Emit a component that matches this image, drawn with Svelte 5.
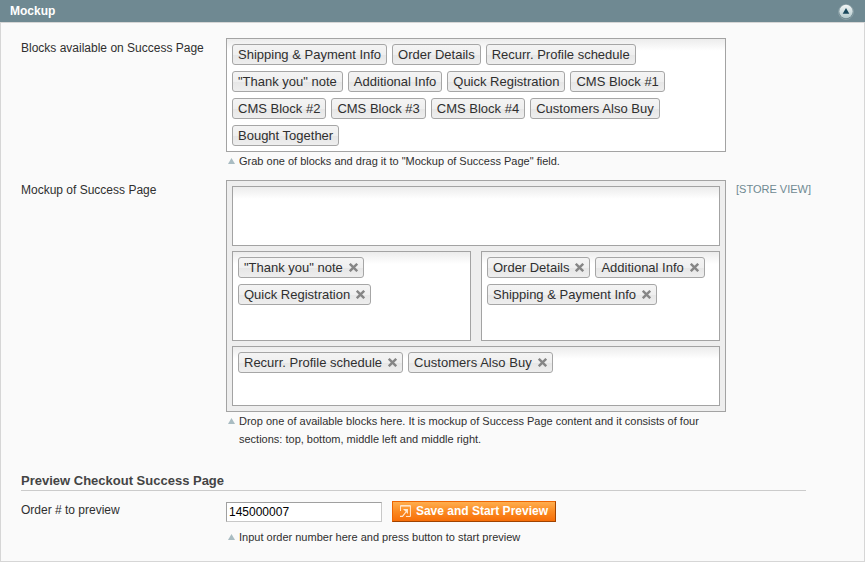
<script>
  const available = [
    'Shipping & Payment Info', 'Order Details', 'Recurr. Profile schedule',
    '"Thank you" note', 'Additional Info', 'Quick Registration', 'CMS Block #1',
    'CMS Block #2', 'CMS Block #3', 'CMS Block #4', 'Customers Also Buy',
    'Bought Together'
  ];
  let sections = $state({
    top: [],
    left: ['"Thank you" note', 'Quick Registration'],
    right: ['Order Details', 'Additional Info', 'Shipping & Payment Info'],
    bottom: ['Recurr. Profile schedule', 'Customers Also Buy']
  });
  let order = $state('145000007');

  function remove(name, i) {
    sections[name].splice(i, 1);
  }
</script>

{#snippet arrow()}
  <svg class="arrow" width="7" height="6" viewBox="0 0 7 6"><path d="M3.5 0L7 6H0Z" fill="#a9bcc2" /></svg>
{/snippet}

{#snippet zone(name)}
  <div class="zone {name}">
    {#each sections[name] as item, i}
      <span class="tag" class:loose={item === 'Customers Also Buy'} class:tight={item === 'Order Details'}>{item}
        <button class="remove" aria-label="Remove" onclick={() => remove(name, i)}>
          <svg width="9" height="9" viewBox="0 0 9 9"><path d="M.8 .8L8.2 8.2M8.2 .8L.8 8.2" stroke="#868686" stroke-width="2.4" /></svg>
        </button>
      </span>
    {/each}
  </div>
{/snippet}

<section class="panel">
  <header>
    <h3>Mockup</h3>
    <svg width="16" height="16" viewBox="0 0 16 16">
      <defs>
        <linearGradient id="ball" x1="0" y1="0" x2="0" y2="1">
          <stop offset="0" stop-color="#f2f6f6" />
          <stop offset="1" stop-color="#b4cacd" />
        </linearGradient>
      </defs>
      <circle cx="8" cy="8" r="7.5" fill="#6b858d" stroke="#8fa5ab" stroke-width=".8" />
      <circle cx="8" cy="7.5" r="6.7" fill="url(#ball)" />
      <path d="M8 4L11.3 9.8H4.7Z" fill="#19485c" />
    </svg>
  </header>
  <div class="body">
    <div class="row">
      <div class="label">Blocks available on Success Page</div>
      <div class="value">
        <div class="zone">
          {#each available as item}<span class="tag" class:loose={item === 'Customers Also Buy'}>{item}</span>{/each}
        </div>
        <p class="note">{@render arrow()}<span>Grab one of blocks and drag it to "Mockup of Success Page" field.</span></p>
      </div>
    </div>
    <div class="row second">
      <div class="label">Mockup of Success Page</div>
      <div class="value">
        <div class="mock">
          {@render zone('top')}
          <div class="middle">
            {@render zone('left')}
            {@render zone('right')}
          </div>
          {@render zone('bottom')}
        </div>
        <p class="note">{@render arrow()}<span>Drop one of available blocks here. It is mockup of Success Page content and it consists of four sections: top, bottom, middle left and middle right.</span></p>
      </div>
      <div class="scope">[STORE VIEW]</div>
    </div>
    <h4>Preview Checkout Success Page</h4>
    <div class="row third">
      <div class="label">Order # to preview</div>
      <div class="value">
        <div class="controls">
          <input type="text" bind:value={order} />
          <button class="save">
            <svg width="11" height="12" viewBox="0 0 11 12" fill="none" stroke="#ffe9d2">
              <path d="M0.5 6V0.5H10.5V11.5H6" />
              <path d="M0 1.5H11" stroke-opacity=".6" />
              <path d="M0 11.5H2.5L6 7" stroke-width="1.2" />
              <path d="M3 4H8V9Z" fill="#ffe9d2" stroke="none" />
            </svg>
            <span>Save and Start Preview</span>
          </button>
        </div>
        <p class="note">{@render arrow()}<span>Input order number here and press button to start preview</span></p>
      </div>
    </div>
  </div>
</section>

<style>
  :global(body) { background: #fafafa; }
  .panel {
    height: 562px;
    display: flex;
    flex-direction: column;
    font: 12px/18px "Liberation Sans", Arial, sans-serif;
    color: #2f2f2f;
  }
  header {
    height: 22px;
    flex: none;
    box-sizing: border-box;
    padding: 0 11px 0 10px;
    display: flex;
    align-items: center;
    justify-content: space-between;
    background: #6f8992;
  }
  header svg { margin-top: 2px; }
  h3 { margin: 0; font-size: 12px; line-height: 22px; color: #fff; }
  .body {
    flex: 1;
    box-sizing: border-box;
    border: 1px solid #d6d6d6;
    background: #fafafa;
    padding: 15px 20px 0;
  }
  .row { display: flex; align-items: flex-start; }
  .label { width: 205px; flex: none; padding-top: 1px; }
  .value { width: 500px; flex: none; }
  .second { margin-top: 10px; }
  .second .scope { margin-left: 10px; font-size: 11px; color: #6f8992; }
  .zone {
    box-sizing: border-box;
    border: 1px solid #a3a3a3;
    padding: 5px;
    display: flex;
    flex-wrap: wrap;
    align-content: flex-start;
    gap: 6px 5px;
    background: #fff linear-gradient(#ececec, #fff) no-repeat 0 0 / 100% 12px;
  }
  .tag {
    box-sizing: border-box;
    height: 21px;
    border: 1px solid #a6a6a6;
    border-radius: 3px;
    padding: 0 5px;
    display: flex;
    align-items: center;
    font-size: 13px;
    line-height: 19px;
    white-space: nowrap;
    background: linear-gradient(#f4f4f4, #efefef 50%, #e6e6e6 51%, #eeeeee);
  }
  .loose { letter-spacing: .04px; }
  .tight { letter-spacing: -.015px; }
  .remove {
    border: 0;
    background: none;
    padding: 0;
    margin-left: 6px;
    display: flex;
  }
  .mock {
    box-sizing: border-box;
    height: 232px;
    padding: 5px;
    border: 1px solid #a3a3a3;
    background: #eee;
    display: flex;
    flex-direction: column;
    gap: 5px;
  }
  .top, .bottom { height: 60px; }
  .middle { display: flex; gap: 10px; height: 90px; }
  .middle .zone { flex: 1; }
  .note {
    margin: 0;
    font-size: 11px;
    display: flex;
    align-items: flex-start;
    padding-left: 2px;
    gap: 4px;
  }
  .arrow { flex: none; margin-top: 6px; }
  h4 {
    margin: 24px 38px 0 0;
    height: 18px;
    border-bottom: 1px solid #cbcbcb;
    font-size: 13px;
    color: #444;
  }
  .third { margin-top: 10px; }
  .third .label { padding-top: 0; }
  .controls { display: flex; gap: 10px; height: 21px; align-items: flex-end; }
  input {
    box-sizing: border-box;
    width: 156px;
    height: 20px;
    border: 1px solid;
    border-color: #a0a0a0 #c8c8c8 #c8c8c8 #a0a0a0;
    padding: 0 2px;
    font: 12px "Liberation Sans", Arial, sans-serif;
    color: #000;
    background: #fff;
  }
  .save {
    box-sizing: border-box;
    width: 164px;
    height: 21px;
    padding: 0 7px;
    border: 1px solid;
    border-color: #ed6502 #a04300 #a04300 #ed6502;
    background: linear-gradient(#ffae4e, #fb8a22 50%, #f76e08);
    color: #fff;
    font: bold 12px/18px "Liberation Sans", Arial, sans-serif;
    display: flex;
    align-items: center;
    gap: 5px;
    white-space: nowrap;
  }
  .save span { line-height: 17px; padding-bottom: 2px; margin-top: 2px; }
  .save svg { margin-bottom: 1px; }
  .third .note { margin-top: 6px; }
</style>
